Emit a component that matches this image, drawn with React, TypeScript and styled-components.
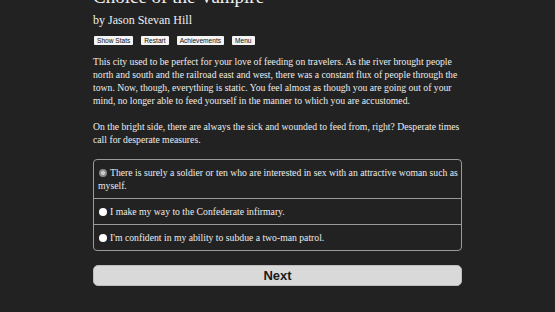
import React, { useState } from 'react';
import styled, { createGlobalStyle } from 'styled-components';

const GlobalStyle = createGlobalStyle`
  html, body {
    margin: 0;
    padding: 0;
    background-color: #222222;
    overflow: hidden;
  }
`;

const Page = styled.div`
  width: 555px;
  height: 312px;
  background-color: #222222;
  color: #e8e8e8;
  font-family: 'Liberation Serif', 'Times New Roman', serif;
  overflow: hidden;
`;

const Column = styled.div`
  width: 369px;
  margin: -14px 0 0 93px;
`;

const Title = styled.h1`
  margin: 0;
  font-size: 19px;
  line-height: 22px;
  font-weight: normal;
  color: #f0f0f0;
`;

const Author = styled.h2`
  margin: 4px 0 0;
  font-size: 12px;
  line-height: 16px;
  font-weight: normal;
  color: #eeeeee;
`;

const ButtonBar = styled.div`
  display: flex;
  gap: 8px;
  margin-top: 8px;
  padding-left: 1px;
`;

const SmallButton = styled.button`
  height: 9px;
  padding: 0 3px;
  border: none;
  border-radius: 1px;
  background-color: #f4f4f4;
  color: #111;
  font-family: 'Liberation Sans', Arial, sans-serif;
  font-size: 6.6px;
  line-height: 9px;
  cursor: pointer;
`;

const Paragraph = styled.p`
  margin: 10px 0 0;
  font-size: 9.7px;
  line-height: 13px;
  color: #ececec;

  & + & {
    margin-top: 13px;
  }
`;

const ChoiceList = styled.div`
  margin-top: 13px;
  border: 1px solid #9a9a9a;
  border-radius: 4px;
  overflow: hidden;
`;

const Choice = styled.label`
  display: block;
  padding: 6px 1px 6px 4px;
  font-size: 9.7px;
  line-height: 13px;
  color: #ececec;
  cursor: pointer;

  & + & {
    border-top: 1px solid #9a9a9a;
  }
`;

const Radio = styled.span<{ $selected?: boolean }>`
  display: inline-block;
  width: 8px;
  height: 8px;
  margin: 0 3px 0 1px;
  border-radius: 50%;
  vertical-align: -1px;
  box-sizing: border-box;
  background-color: ${({ $selected }) => ($selected ? '#bdbdbd' : '#ffffff')};
  border: ${({ $selected }) => ($selected ? '2px solid #8a8a8a' : 'none')};
  box-shadow: ${({ $selected }) => ($selected ? 'inset 0 0 0 1px #e6e6e6' : 'none')};
`;

const NextButton = styled.button`
  display: block;
  width: 100%;
  height: 21px;
  margin-top: 14px;
  border: 1px solid #bdbdbd;
  border-radius: 5px;
  background-color: #d9d9d9;
  color: #1a1a1a;
  font-family: 'Liberation Sans', Arial, sans-serif;
  font-size: 13px;
  font-weight: bold;
  cursor: pointer;
`;

const choices = [
  'There is surely a soldier or ten who are interested in sex with an attractive woman such as myself.',
  'I make my way to the Confederate infirmary.',
  "I'm confident in my ability to subdue a two-man patrol.",
];

const App: React.FC = () => {
  const [selected, setSelected] = useState<number>(0);

  return (
    <Page>
      <GlobalStyle />
      <Column>
        <Title>Choice of the Vampire</Title>
        <Author>by Jason Stevan Hill</Author>
        <ButtonBar>
          <SmallButton>Show Stats</SmallButton>
          <SmallButton>Restart</SmallButton>
          <SmallButton>Achievements</SmallButton>
          <SmallButton>Menu</SmallButton>
        </ButtonBar>
        <Paragraph>
          This city used to be perfect for your love of feeding on travelers. As the river brought people
          north and south and the railroad east and west, there was a constant flux of people through the
          town. Now, though, everything is static. You feel almost as though you are going out of your
          mind, no longer able to feed yourself in the manner to which you are accustomed.
        </Paragraph>
        <Paragraph>
          On the bright side, there are always the sick and wounded to feed from, right? Desperate times
          call for desperate measures.
        </Paragraph>
        <ChoiceList>
          {choices.map((text, i) => (
            <Choice key={i} onClick={() => setSelected(i)}>
              <Radio $selected={selected === i} />
              {text}
            </Choice>
          ))}
        </ChoiceList>
        <NextButton>Next</NextButton>
      </Column>
    </Page>
  );
};

export default App;
